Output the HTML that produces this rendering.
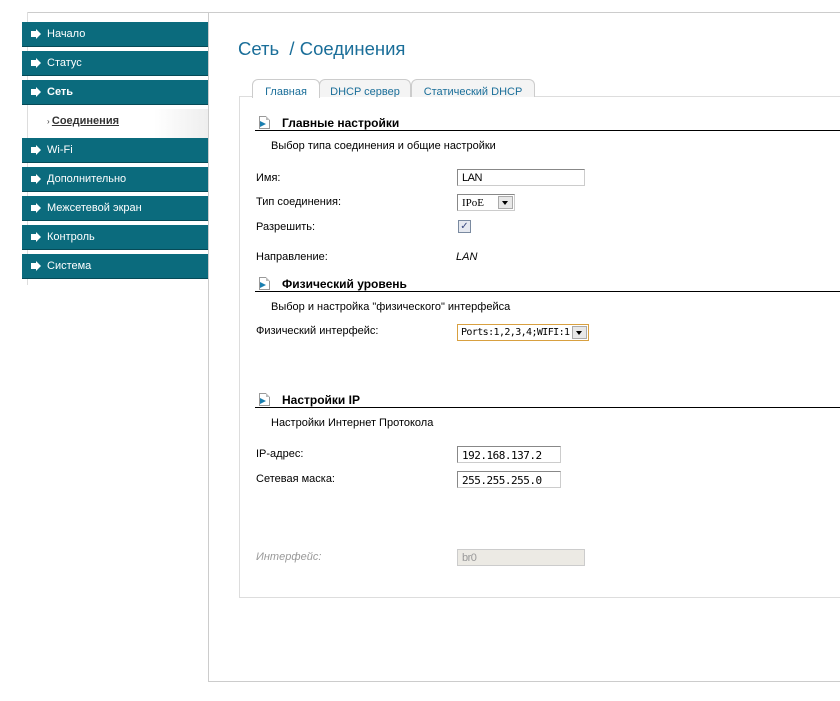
<!DOCTYPE html>
<html><head><meta charset="utf-8"><style>
*{margin:0;padding:0;box-sizing:border-box}
body{width:840px;height:701px;background:#fff;position:relative;overflow:hidden;font-family:"Liberation Sans","DejaVu Sans",sans-serif;font-size:11px;color:#000}
.a{position:absolute}
.m{position:absolute;left:22px;width:186px;height:25px;background:#0b6b7d;color:#fff;font-size:11px;line-height:24px;padding-left:25px;border-bottom:1px solid #064a57}
.m:before{content:"";position:absolute;left:9px;top:9px;width:5px;height:6px;background:#fff}
.m:after{content:"";position:absolute;left:14px;top:7px;border-left:5px solid #fff;border-top:5px solid transparent;border-bottom:5px solid transparent}
.hl{position:absolute;left:255px;width:585px;border-top:1px solid #000}
.h{position:absolute;left:282px;font-weight:bold;font-size:12px}
.ic{position:absolute;left:259px;width:11px;height:13px;border:1px solid #999;background:#fff}
.ic:before{content:"";position:absolute;right:-1px;top:-1px;border-top:4px solid #fff;border-left:4px solid #bbb}
.ic:after{content:"";position:absolute;left:0px;top:4px;border-left:6px solid #1a7fb0;border-top:3px solid transparent;border-bottom:3px solid transparent}
.in{position:absolute;height:17px;border:1px solid #ccc;border-top-color:#888;border-left-color:#888;font-size:11px;padding:2px 4px;font-family:"DejaVu Sans Mono","Liberation Mono",monospace;letter-spacing:-0.5px;overflow:hidden;white-space:nowrap}
.dd{position:absolute;width:15px;height:13px;top:1px;right:1px;background:#e8e8e8;border:1px solid #aaa}
.dd:after{content:"";position:absolute;left:3px;top:4px;border-top:4px solid #000;border-left:3px solid transparent;border-right:3px solid transparent}
.tab{position:absolute;top:79px;height:18px;border:1px solid #ccc;border-bottom:none;border-radius:6px 6px 0 0;color:#1a6e99;font-size:11px;text-align:center;line-height:24px;background:#f4f4f4;overflow:hidden}
</style></head><body>
<div class="a" style="left:27px;top:12px;width:813px;border-top:1px solid #ccc"></div>
<div class="a" style="left:27px;top:12px;height:273px;border-left:1px solid #ddd"></div>
<div class="a" style="left:208px;top:12px;height:670px;border-left:1px solid #ccc"></div>
<div class="a" style="left:208px;top:681px;width:632px;border-top:1px solid #ccc"></div>

<div class="m" style="top:22px">Начало</div>
<div class="m" style="top:51px">Статус</div>
<div class="m" style="top:80px;font-weight:bold">Сеть</div>
<div class="a" style="left:28px;top:109px;width:180px;height:29px;background:linear-gradient(90deg,#fff 70%,#eee)"></div>
<div class="a" style="left:47px;top:115px;font-weight:bold;color:#333"><span style="font-weight:normal;font-size:8px">› </span><u>Соединения</u></div>
<div class="m" style="top:138px">Wi-Fi</div>
<div class="m" style="top:167px">Дополнительно</div>
<div class="m" style="top:196px">Межсетевой экран</div>
<div class="m" style="top:225px">Контроль</div>
<div class="m" style="top:254px">Система</div>

<div class="a" style="left:238px;top:38px;font-size:18.5px;color:#1a6e99">Сеть&nbsp; / Соединения</div>

<div class="a" style="left:239px;top:96px;width:610px;height:502px;border:1px solid #ddd"></div>
<div class="tab" style="left:252px;width:68px;height:19px;background:#fff;border-color:#ccc">Главная</div>
<div class="tab" style="left:319px;width:92px">DHCP сервер</div>
<div class="tab" style="left:411px;width:124px">Статический DHCP</div>

<div class="ic" style="top:116px"></div><div class="h" style="top:116px">Главные настройки</div>
<div class="hl" style="top:130px"></div>
<div class="a" style="left:271px;top:140px">Выбор типа соединения и общие настройки</div>
<div class="a" style="left:256px;top:172px">Имя:</div>
<div class="in" style="left:457px;top:169px;width:128px;font-family:'Liberation Sans',sans-serif">LAN</div>
<div class="a" style="left:256px;top:196px">Тип соединения:</div>
<div class="in" style="left:457px;top:194px;width:58px;font-family:'Liberation Serif',serif;letter-spacing:0">IPoE<div class="dd"></div></div>
<div class="a" style="left:256px;top:221px">Разрешить:</div>
<div class="a" style="left:458px;top:220px;width:13px;height:13px;border:1px solid #7a8aa0;background:#e6e9f0;color:#3a4a80;font-size:10px;line-height:11px;text-align:center">✓</div>
<div class="a" style="left:256px;top:251px">Направление:</div>
<div class="a" style="left:456px;top:251px;font-style:italic">LAN</div>

<div class="ic" style="top:277px"></div><div class="h" style="top:277px">Физический уровень</div>
<div class="hl" style="top:291px"></div>
<div class="a" style="left:271px;top:301px">Выбор и настройка "физического" интерфейса</div>
<div class="a" style="left:256px;top:325px">Физический интерфейс:</div>
<div class="in" style="left:457px;top:324px;width:132px;border:1px solid #d8a040;font-size:10px;letter-spacing:-0.6px;padding:2px 3px">Ports:1,2,3,4;WIFI:1<div class="dd"></div></div>

<div class="ic" style="top:393px"></div><div class="h" style="top:393px">Настройки IP</div>
<div class="hl" style="top:407px"></div>
<div class="a" style="left:271px;top:417px">Настройки Интернет Протокола</div>
<div class="a" style="left:256px;top:448px">IP-адрес:</div>
<div class="in" style="left:457px;top:446px;width:104px">192.168.137.2</div>
<div class="a" style="left:256px;top:473px">Сетевая маска:</div>
<div class="in" style="left:457px;top:471px;width:104px">255.255.255.0</div>
<div class="a" style="left:256px;top:551px;font-style:italic;color:#999">Интерфейс:</div>
<div class="in" style="left:457px;top:549px;width:128px;background:#eceae4;color:#999;font-family:'Liberation Sans',sans-serif;border-color:#ccc">br0</div>
</body></html>
